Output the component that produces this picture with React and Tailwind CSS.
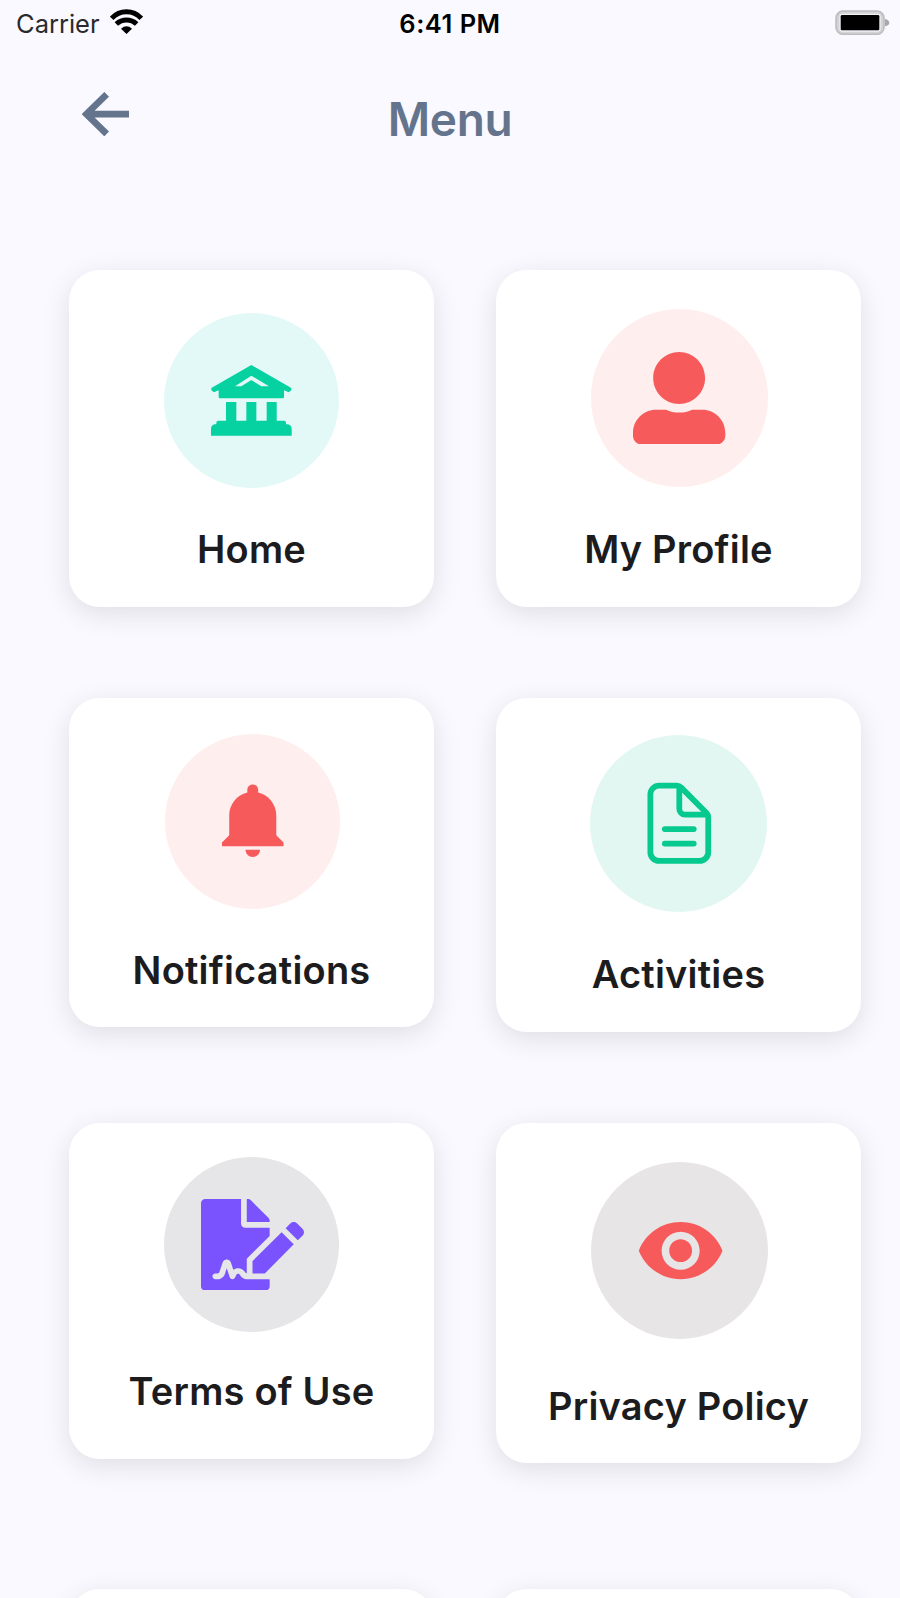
import { FaFileSignature, FaUserAlt } from "react-icons/fa";
import { IoMdNotifications } from "react-icons/io";
import { IoDocumentTextOutline } from "react-icons/io5";
import { MdVisibility } from "react-icons/md";

function BankIcon() {
  return (
    <svg viewBox="0 0 242 212" className="h-[70.7px] w-[80.7px]" fill="currentColor">
      <path
        fillRule="evenodd"
        d="M121 0 241 69V76L233 82 219 76V96Q219 100 215 100H27Q23 100 23 96V76L9 82 1 76V69ZM72 64H91L121 45 151 64H174L121 32Z"
      />
      <path d="M45 111h31v56h30v-56h30v56h31v-56h30v56h22q6 0 6 6v5h6q11 4 11 13v21H0v-21q0-9 10-13h6v-5q0-6 6-6h23Z" />
    </svg>
  );
}

function WifiIcon() {
  return (
    <svg viewBox="0 0 99 75" className="h-[25px] w-[33px]" fill="none" stroke="#000">
      <path d="M5 28Q23 8 49.500 8T94 28" strokeWidth="15" />
      <path d="M19 45Q32 33 49.500 33T80 45" strokeWidth="15" />
      <path d="M33 59Q49.500 45 66 59L49.500 75Z" fill="#000" stroke="none" />
    </svg>
  );
}

function BatteryIcon() {
  return (
    <svg viewBox="0 0 164 76" className="h-[25.300px] w-[54.700px]">
      <rect x="3" y="3" width="144" height="70" rx="21" fill="#d3d2d5" stroke="#bdbcbf" strokeWidth="5" />
      <rect x="13" y="11" width="124" height="54" rx="9" fill="#f1f0f3" />
      <rect x="17" y="15" width="116" height="46" rx="4" fill="#000" />
      <path d="M150 27q13 3 13 11t-13 11Z" fill="#a9a8ac" />
    </svg>
  );
}

function Card({ label, card, circle, text, children }) {
  return (
    <div
      className={`flex w-[365px] flex-col items-center rounded-[31px] bg-white shadow-[0_7px_28px_rgba(0,0,0,0.11)] ${card}`}
    >
      <div className={`flex shrink-0 items-center justify-center rounded-full ${circle}`}>{children}</div>
      <span className={`text-[38px] leading-[40px] font-semibold tracking-[0.2px] whitespace-nowrap text-[#1c1c1e] ${text}`}>
        {label}
      </span>
    </div>
  );
}

export default function App() {
  return (
    <div className="flex h-[1598px] w-[900px] flex-col overflow-hidden bg-[#faf9ff] font-['Inter','Liberation_Sans',sans-serif]">
      <div className="grid h-[48px] shrink-0 grid-cols-3 items-start px-[11px] text-black">
        <div className="flex items-start pt-[9px] pl-[5px]">
          <span className="text-[25.5px] leading-[30px] text-[#2a2a2c]">Carrier</span>
          <span className="ml-[10px]">
            <WifiIcon />
          </span>
        </div>
        <span className="pt-[9px] text-center text-[25.5px] leading-[30px] font-semibold tracking-[0.5px]">6:41 PM</span>
        <div className="-mr-px flex justify-end pt-[10px]">
          <BatteryIcon />
        </div>
      </div>

      <header className="grid h-[221.5px] shrink-0 grid-cols-3 items-start px-[81px] text-[#64748d]">
        <svg viewBox="0 0 141 133" className="mt-[44px] ml-[0.7px] h-[44.3px] w-[47px]" fill="none" stroke="currentColor" strokeWidth="20">
          <path d="M74 7 13 66.500 74 126M13 66.500H141" />
        </svg>
        <h1 className="mt-[47px] text-center text-[46px] leading-[48px] font-semibold tracking-[-0.3px]">Menu</h1>
      </header>

      <main className="grid shrink-0 grid-cols-[365px_365px] grid-rows-[428px_425px_466.5px_340px] items-start gap-x-[62px] pl-[69px]">
        <Card label="Home" card="h-[337px] pt-[43.5px]" circle="size-[175px] bg-[#e3f9f7] text-[#05d1a1]" text="mt-[40.5px]">
          <BankIcon />
        </Card>
        <Card label="My Profile" card="h-[337px] pt-[39.5px]" circle="ml-[2px] size-[177.5px] bg-[#ffeeee] text-[#f65a5b]" text="mt-[42px]">
          <FaUserAlt className="size-[92.3px]" />
        </Card>
        <Card label="Notifications" card="h-[329.5px] pt-[36px]" circle="ml-[2px] size-[175px] bg-[#ffeeee] text-[#f65a5b]" text="mt-[41px]">
          <IoMdNotifications className="size-[89.5px]" />
        </Card>
        <Card label="Activities" card="h-[334px] pt-[37.5px]" circle="size-[177px] bg-[#e3f7f2] text-[#06c990]" text="mt-[42px]">
          <IoDocumentTextOutline className="ml-[2px] size-[92.6px]" />
        </Card>
        <Card label="Terms of Use" card="h-[336px] pt-[34.5px]" circle="size-[175px] bg-[#e6e6e8] text-[#7a53ff]" text="mt-[39px]">
          <FaFileSignature className="ml-px h-[91.7px] w-[103px]" />
        </Card>
        <Card label="Privacy Policy" card="h-[340.5px] pt-[39.5px]" circle="ml-px size-[177px] bg-[#e7e5e6] text-[#f75a5b]" text="mt-[47px]">
          <MdVisibility className="ml-[3px] size-[91.3px]" />
        </Card>
        <div className="h-[337px] w-[365px] rounded-[31px] bg-white shadow-[0_7px_28px_rgba(0,0,0,0.11)]" />
        <div className="h-[337px] w-[365px] rounded-[31px] bg-white shadow-[0_7px_28px_rgba(0,0,0,0.11)]" />
      </main>
    </div>
  );
}
